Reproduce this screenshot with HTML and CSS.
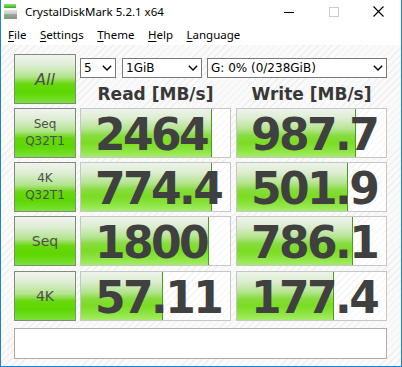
FILE: index.html
```html
<!DOCTYPE html>
<html>
<head>
<meta charset="utf-8">
<title>CrystalDiskMark 5.2.1 x64</title>
<link rel="stylesheet" href="styles.css">
</head>
<body>
<div class="window">
  <div class="titlebar">
    <svg class="app-icon" width="16" height="16" viewBox="0 0 16 16">
      <defs>
        <linearGradient id="gtop" x1="0" y1="0" x2="0" y2="1">
          <stop offset="0" stop-color="#8ee86a"/>
          <stop offset="1" stop-color="#3aa82a"/>
        </linearGradient>
        <linearGradient id="gbody" x1="0" y1="0" x2="0" y2="1">
          <stop offset="0" stop-color="#e4e4e4"/>
          <stop offset="0.45" stop-color="#c6c6c6"/>
          <stop offset="0.5" stop-color="#a4a4a4"/>
          <stop offset="1" stop-color="#8c8c8c"/>
        </linearGradient>
      </defs>
      <rect x="1" y="1" width="12" height="4" fill="url(#gtop)"/>
      <rect x="1" y="7" width="13" height="9" fill="url(#gbody)"/>
      <rect x="2" y="12" width="4" height="2" fill="#46d040"/>
    </svg>
    <span class="title">CrystalDiskMark 5.2.1 x64</span>
    <div class="controls">
      <span class="ctl"><svg width="10" height="10" viewBox="0 0 10 10"><path d="M0 5.5H10" stroke="#000" stroke-width="1"/></svg></span>
      <span class="ctl"><svg width="10" height="10" viewBox="0 0 10 10"><rect x="0.5" y="0.5" width="9" height="9" fill="none" stroke="#cccccc" stroke-width="1"/></svg></span>
      <span class="ctl"><svg width="11" height="11" viewBox="0 0 11 11"><path d="M0.5 0.5L10.5 10.5M10.5 0.5L0.5 10.5" stroke="#000" stroke-width="1.1"/></svg></span>
    </div>
  </div>
  <div class="menubar">
    <span class="menu"><u>F</u>ile</span>
    <span class="menu"><u>S</u>ettings</span>
    <span class="menu"><u>T</u>heme</span>
    <span class="menu"><u>H</u>elp</span>
    <span class="menu"><u>L</u>anguage</span>
  </div>
  <div class="content">
    <div class="board">
      <div class="label all">All</div>
      <div class="top">
        <div class="selects">
          <div class="sel sel-n"><span>5</span><svg class="chev" width="10" height="6" viewBox="0 0 10 6"><path d="M0.8 0.8L5 5L9.2 0.8" fill="none" stroke="#000" stroke-width="1.4"/></svg></div>
          <div class="sel sel-size"><span>1GiB</span><svg class="chev" width="10" height="6" viewBox="0 0 10 6"><path d="M0.8 0.8L5 5L9.2 0.8" fill="none" stroke="#000" stroke-width="1.4"/></svg></div>
          <div class="sel sel-drive"><span>G: 0% (0/238GiB)</span><svg class="chev" width="10" height="6" viewBox="0 0 10 6"><path d="M0.8 0.8L5 5L9.2 0.8" fill="none" stroke="#000" stroke-width="1.4"/></svg></div>
        </div>
        <div class="heads">
          <div class="head head-read">Read [MB/s]</div>
          <div class="head head-write">Write [MB/s]</div>
        </div>
      </div>

      <div class="label"><span>Seq</span><span>Q32T1</span></div>
      <div class="cell"><div class="bar" style="width:131px"></div><div class="num">2464</div></div>
      <div class="cell write"><div class="bar" style="width:119px"></div><div class="num">987.7</div></div>

      <div class="label"><span>4K</span><span>Q32T1</span></div>
      <div class="cell"><div class="bar" style="width:131px"></div><div class="num">774.4</div></div>
      <div class="cell write"><div class="bar" style="width:111px"></div><div class="num">501.9</div></div>

      <div class="label single">Seq</div>
      <div class="cell"><div class="bar" style="width:128px"></div><div class="num">1800</div></div>
      <div class="cell write"><div class="bar" style="width:116px"></div><div class="num">786.1</div></div>

      <div class="label single">4K</div>
      <div class="cell"><div class="bar" style="width:82px"></div><div class="num">57.11</div></div>
      <div class="cell write"><div class="bar" style="width:97px"></div><div class="num">177.4</div></div>
    </div>
    <div class="comment"></div>
  </div>
</div>
</body>
</html>
```
FILE: styles.css
```css
* { box-sizing: border-box; }
html, body { margin: 0; padding: 0; }
body { width: 402px; height: 367px; overflow: hidden; background: #ffffff; }

.window {
  width: 402px;
  height: 367px;
  border: 1px solid #1883d7;
  border-top: none;
  display: flex;
  flex-direction: column;
  background: #ffffff;
}

.titlebar {
  height: 25px;
  display: flex;
  align-items: flex-start;
  padding-left: 2px;
  background: #ffffff;
}
.app-icon { margin-top: 3px; flex: none; }
.title {
  margin-left: 6px;
  font: 11.5px/25px "Noto Sans", "Open Sans", sans-serif;
  color: #000;
  margin-top: -1px;
}
.controls { margin-left: auto; display: flex; height: 25px; }
.ctl {
  width: 45px;
  height: 25px;
  display: flex;
  align-items: center;
  justify-content: center;
  padding-bottom: 2px;
}

.menubar {
  height: 20px;
  display: flex;
  gap: 13.5px;
  padding-left: 7px;
  font: 11.5px/19px "Noto Sans", "Open Sans", sans-serif;
  color: #000;
  background: #ffffff;
}
.menu u { text-decoration-thickness: 1px; text-underline-offset: 2px; }

.content {
  flex: 1;
  padding: 9px 0 0 13px;
  background-color: #fafafa;
  background-image: repeating-linear-gradient(135deg, #fafafa 0 4px, #efefef 4px 5px);
}

.board {
  display: grid;
  grid-template-columns: 62px 151px 152px;
  grid-template-rows: 50px 50px 50px 51px 50px;
  column-gap: 4px;
  row-gap: 4px;
  width: 373px;
}

.label {
  height: 50px;
  border: 1px solid #7e8c7c;
  background: linear-gradient(to bottom, #f3f3f1 0%, #dcedd2 22%, #b2e48c 46%, #68d80e 60%, #5cd700 78%, #7ce13a 100%);
  display: flex;
  flex-direction: column;
  align-items: center;
  justify-content: center;
  font: 12px/17px "DejaVu Sans", Verdana, sans-serif;
  color: #4e4e4e;
}
.label.all { font-size: 16px; font-style: italic; line-height: 20px; padding-top: 1px; }
.label.single { font-size: 14px; line-height: 18px; }

.top { grid-column: 2 / 4; display: flex; flex-direction: column; }
.selects { display: flex; margin-top: 4px; height: 20px; }
.sel {
  height: 20px;
  border: 1px solid #7a7a7a;
  background: #ffffff;
  display: flex;
  align-items: center;
  justify-content: space-between;
  padding: 0 3px 0 3px;
  font: 12px/18px "DejaVu Sans", Verdana, sans-serif;
  color: #000;
}
.chev { flex: none; }
.sel-n { width: 36px; }
.sel-size { width: 80px; margin-left: 6px; }
.sel-drive { width: 180px; margin-left: 5px; }

.heads { display: flex; margin-top: 6px; height: 20px; }
.head {
  text-align: center;
  font: bold 17px/20px "DejaVu Sans", Verdana, sans-serif;
  color: #383838;
}
.head-read { width: 151px; }
.head-write { width: 151px; margin-left: 5px; }

.cell {
  height: 50px;
  border: 1px solid #c6c6c6;
  display: grid;
  background-color: #ffffff;
  background-image: repeating-linear-gradient(135deg, #ffffff 0 4px, #f4f4f4 4px 5px);
}
.cell.write { margin-left: 1px; }
.bar {
  grid-area: 1 / 1;
  height: 48px;
  border-right: 1px solid #4c9a26;
  background: linear-gradient(to bottom, #eef3ec 0%, #dcedd0 20%, #b4e48e 42%, #86dc3e 56%, #7bdc22 70%, #8ae43e 85%, #a6ec68 100%);
}
.num {
  grid-area: 1 / 1;
  height: 48px;
  padding: 4px 0 0 14px;
  font: bold 44px/44px "DejaVu Sans", Verdana, sans-serif;
  letter-spacing: -2.6px;
  color: #404040;
  white-space: nowrap;
}

.comment {
  margin-top: 7px;
  width: 373px;
  height: 31px;
  border: 1px solid #acacac;
  background: #ffffff;
}
```
